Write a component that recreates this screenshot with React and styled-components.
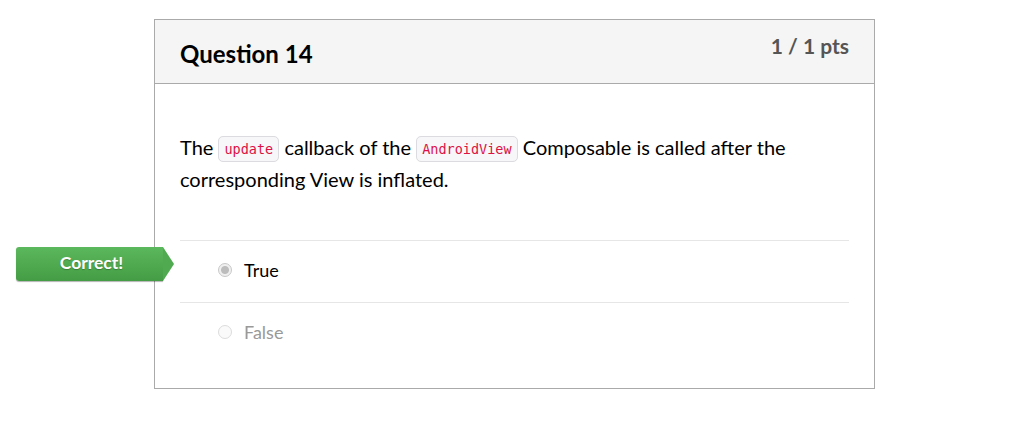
import styled, { createGlobalStyle } from "styled-components";

const GlobalStyle = createGlobalStyle`
  body {
    margin: 0;
    background: #fff;
    font-family: Lato, "Open Sans", sans-serif;
    color: #2d3b45;
  }
`;

const Page = styled.div`
  padding: 19px 0 0 154px;
  width: 1011px;
  height: 422px;
  box-sizing: border-box;
`;

const Card = styled.div`
  width: 721px;
  box-sizing: border-box;
  border: 1px solid #aaa;
`;

const Header = styled.div`
  display: flex;
  justify-content: space-between;
  align-items: flex-start;
  height: 64px;
  box-sizing: border-box;
  padding: 0 25px;
  background: #f5f5f5;
  border-bottom: 1px solid #aaa;
`;

const Title = styled.h2`
  margin: 19px 0 0;
  font-size: 24px;
  line-height: 30px;
  font-weight: 700;
  color: #000;
`;

const Points = styled.div`
  margin-top: 12px;
  font-size: 21px;
  line-height: 28px;
  font-weight: 700;
  color: #555;
`;

const Body = styled.div`
  padding: 47px 25px 24px;
`;

const Text = styled.p`
  margin: 0 0 45px;
  font-size: 20px;
  line-height: 32px;
  color: #000;
`;

const Code = styled.code`
  font-family: "DejaVu Sans Mono", "Liberation Mono", monospace;
  font-size: 13.5px;
  line-height: 1;
  color: #dd1144;
  background: #f7f7f9;
  border: 1px solid #dcdce0;
  border-radius: 5px;
  padding: 4px 5px;
  vertical-align: 1px;
`;

const Answer = styled.div`
  position: relative;
  display: flex;
  align-items: center;
  gap: 12px;
  height: 62px;
  box-sizing: border-box;
  padding: 0 0 3px 38px;
  border-top: 1px solid #e6e6e6;
  font-size: 18px;
  color: ${(p) => (p.$selected ? "#000" : "#999")};
`;

const Radio = styled.span`
  width: 14px;
  height: 14px;
  box-sizing: border-box;
  border-radius: 50%;
  border: 1px solid ${(p) => (p.$checked ? "#c8c8c8" : "#dcdcdc")};
  background: ${(p) =>
    p.$checked ? "radial-gradient(circle, #bdbdbd 0 3.5px, #f0f0f0 4.5px)" : "#fafafa"};
`;

const Badge = styled.div`
  position: absolute;
  left: -164px;
  top: 6px;
  width: 147px;
  height: 34px;
  display: flex;
  align-items: center;
  justify-content: center;
  padding: 0 0 3px 4px;
  box-sizing: border-box;
  color: #fff;
  font-size: 17.5px;
  font-weight: 700;
  text-shadow: 0 1px 1px rgba(0, 0, 0, 0.25);
  background: linear-gradient(#5cb85c, #449d44);
  border-radius: 3px 0 0 3px;
  box-shadow: 0 1px 1px rgba(0, 0, 0, 0.3);

  &::after {
    content: "";
    position: absolute;
    right: -11px;
    top: 0;
    border-top: 17px solid transparent;
    border-bottom: 17px solid transparent;
    border-left: 11px solid #50aa50;
  }
`;

const answers = [
  { label: "True", selected: true, correct: true },
  { label: "False", selected: false },
];

export default function App() {
  return (
    <>
      <GlobalStyle />
      <Page>
        <Card>
          <Header>
            <Title>Question 14</Title>
            <Points>1 / 1 pts</Points>
          </Header>
          <Body>
            <Text>
              The <Code>update</Code> callback of the <Code>AndroidView</Code>{" "}
              Composable is called after the corresponding View is inflated.
            </Text>
            {answers.map((a) => (
              <Answer key={a.label} $selected={a.selected}>
                {a.correct && <Badge>Correct!</Badge>}
                <Radio $checked={a.selected} />
                {a.label}
              </Answer>
            ))}
          </Body>
        </Card>
      </Page>
    </>
  );
}
